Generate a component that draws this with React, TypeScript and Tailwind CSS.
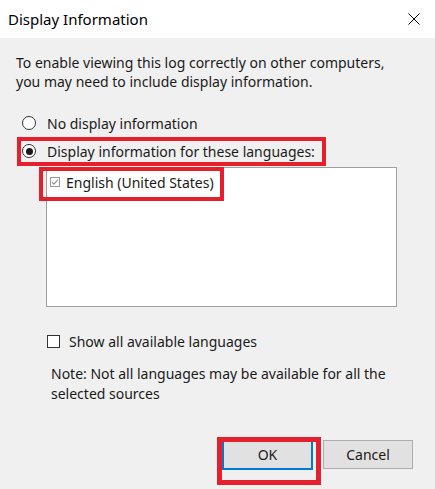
import React from "react";

// Windows-style "Display Information" dialog with red annotation boxes

const font = { fontFamily: '"Noto Sans", "Open Sans", Arial, sans-serif' };

function Radio({ checked }: { checked?: boolean }) {
  return (
    <span className="flex h-[14px] w-[14px] shrink-0 items-center justify-center rounded-full border border-[#333333] bg-white">
      {checked && <span className="h-[7px] w-[7px] rounded-full bg-[#1a1a1a]" />}
    </span>
  );
}

export default function App() {
  return (
    <div
      className="relative flex h-[489px] w-[435px] flex-col overflow-hidden bg-[#f0f0f0] text-[14px] text-[#1a1a1a]"
      style={font}
    >
      {/* Title bar */}
      <div className="flex h-[38px] shrink-0 items-center justify-between bg-white pl-[8px] pr-[15px]">
        <span className="text-[15px] text-black">Display Information</span>
        <svg width="12" height="12" viewBox="0 0 12 12" className="text-black">
          <path d="M0.5 0.5 L11.5 11.5 M11.5 0.5 L0.5 11.5" stroke="currentColor" strokeWidth="1" />
        </svg>
      </div>

      {/* Body */}
      <div className="flex flex-1 flex-col pl-[16px] pt-[15px]">
        <p className="leading-[19px]">
          To enable viewing this log correctly on other computers,
          <br />
          you may need to include display information.
        </p>

        <div className="mt-[22px] flex h-[20px] items-center gap-[11px] pl-[6px]">
          <Radio />
          <span>No display information</span>
        </div>
        <div className="mt-[8px] flex h-[20px] items-center gap-[11px] pl-[6px]">
          <Radio checked />
          <span>Display information for these languages:</span>
        </div>

        {/* Language list */}
        <div className="ml-[30px] mt-[6px] h-[140px] w-[351px] border border-[#a0a0a0] bg-white pl-[3px] pt-[4px]">
          <div className="flex h-[20px] items-center gap-[6px]">
            <span className="flex h-[10px] w-[10px] items-center justify-center border border-[#9a9a9a] bg-white">
              <svg width="8" height="8" viewBox="0 0 8 8">
                <path d="M1 4.2 L3 6.2 L7 1.5" fill="none" stroke="#8a8a8a" strokeWidth="1.1" />
              </svg>
            </span>
            <span>English (United States)</span>
          </div>
        </div>

        <div className="ml-[31px] mt-[24px] flex h-[20px] items-center gap-[9px]">
          <span className="h-[13px] w-[13px] border border-[#333333] bg-white" />
          <span>Show all available languages</span>
        </div>

        <p className="ml-[35px] mt-[13px] leading-[20px]">
          Note: Not all languages may be available for all the
          <br />
          selected sources
        </p>

        {/* Buttons */}
        <div className="ml-[206px] mt-[35px] flex gap-[10px]">
          <button className="h-[31px] w-[91px] border-2 border-[#0078d7] bg-[#e1e1e1] text-[14px]">OK</button>
          <button className="mt-[1px] h-[29px] w-[90px] border border-[#adadad] bg-[#e1e1e1] text-[14px]">
            Cancel
          </button>
        </div>
      </div>

      {/* Red annotation boxes */}
      <div className="absolute left-[17px] top-[137px] h-[29px] w-[309px] border-4 border-[#e3202b]" />
      <div className="absolute left-[39px] top-[167px] h-[34px] w-[185px] border-4 border-[#e3202b]" />
      <div className="absolute left-[217px] top-[437px] h-[48px] w-[104px] border-[5px] border-[#e3202b]" />
    </div>
  );
}
